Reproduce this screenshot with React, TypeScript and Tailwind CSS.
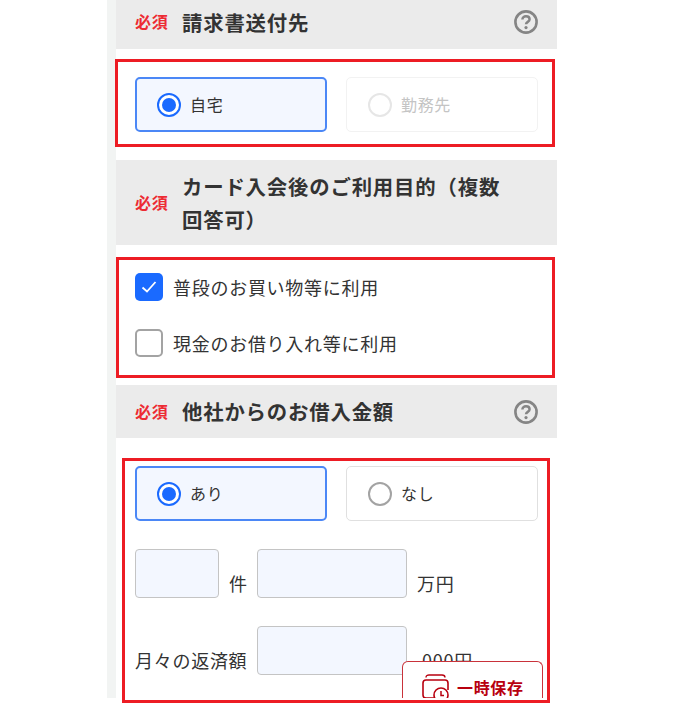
const font = { fontFamily: '"Noto Sans CJK JP", "Noto Sans", sans-serif' };

const HelpIcon = () => (
  <svg width="24" height="24" viewBox="0 0 24 24" fill="none" className="shrink-0">
    <circle cx="12" cy="12" r="10.6" stroke="#858585" strokeWidth="2.6" />
    <path d="M8.4 9.6c0-2.1 1.6-3.3 3.6-3.3s3.6 1.2 3.6 3c0 2.6-3.6 2.5-3.6 5" stroke="#858585" strokeWidth="2.5" />
    <circle cx="12" cy="17.6" r="1.6" fill="#858585" />
  </svg>
);

const SectionHead = ({ title, help, className }: { title: string; help?: boolean; className: string }) => (
  <div className={`flex items-center bg-[#ebebeb] pl-[19px] pr-[19px] ${className}`}>
    <span className="-mt-[2px] w-[47px] shrink-0 text-[16px] font-bold tracking-[0.04em] text-[#ed2b33]">必須</span>
    <h2 className="flex-1 pr-[24px] text-[20.4px] leading-[33px] font-bold tracking-[0.04em] text-[#333]">{title}</h2>
    {help && <HelpIcon />}
  </div>
);

const RadioCard = ({ label, state }: { label: string; state: 'on' | 'off' | 'disabled' }) => {
  const card =
    state === 'on'
      ? 'border-2 border-[#4b87f6] bg-[#f3f7ff] pl-[20px] text-[#333]'
      : state === 'off'
        ? 'border border-[#e0e0e0] bg-white pl-[21px] text-[#333]'
        : 'border border-[#f2f2f2] bg-white pl-[21px] text-[#c4c4c4]';
  return (
    <div className={`flex h-[55px] w-[192px] items-center gap-[9px] rounded-[5px] ${card}`}>
      {state === 'on' ? (
        <span className="flex h-[24px] w-[24px] items-center justify-center rounded-full border-2 border-[#1a6aff] bg-white">
          <span className="h-[14px] w-[14px] rounded-full bg-[#1a6aff]" />
        </span>
      ) : (
        <span className={`h-[24px] w-[24px] rounded-full border-2 bg-white ${state === 'off' ? 'border-[#a3a3a3]' : 'border-[#e6e6e6]'}`} />
      )}
      <span className="pb-[2px] text-[16px] tracking-[0.04em]">{label}</span>
    </div>
  );
};

const CheckRow = ({ label, checked }: { label: string; checked?: boolean }) => (
  <div className="flex items-center gap-[10px]">
    {checked ? (
      <span className="flex h-[28px] w-[28px] items-center justify-center rounded-[5px] bg-[#1a6aff]">
        <svg width="16" height="14" viewBox="0 0 16 14" fill="none">
          <path d="M1.5 7.5l4.5 4L14.5 2" stroke="#fff" strokeWidth="1.8" />
        </svg>
      </span>
    ) : (
      <span className="h-[28px] w-[28px] rounded-[5px] border-2 border-[#a3a3a3] bg-white" />
    )}
    <span className="text-[18px] leading-[28px] tracking-[0.04em] text-[#333]">{label}</span>
  </div>
);

const TextBox = ({ className }: { className: string }) => (
  <div className={`h-[49px] rounded-[4px] border border-[#c4c4c4] bg-[#f3f7ff] ${className}`} />
);

export default function App() {
  return (
    <div className="relative h-[710px] w-[673px] overflow-hidden bg-white" style={font}>
      <div className="ml-[107px] flex items-start">
        <div className="h-[698px] w-[9px] shrink-0 bg-[#f2f4f3]" />
        <div className="w-[441px] shrink-0">
          <SectionHead title="請求書送付先" help className="h-[49px] pb-[5px]" />

          <div className="mt-[10px] flex h-[88px] w-[440px] -ml-px gap-[19px] border-[3px] border-[#ed1c24] pl-[17px] pt-[15px]">
            <RadioCard label="自宅" state="on" />
            <RadioCard label="勤務先" state="disabled" />
          </div>

          <SectionHead title="カード入会後のご利用目的（複数回答可）" className="mt-[13px] h-[85px]" />

          <div className="mt-[12px] flex h-[121px] w-[439px] flex-col gap-[28px] border-[3px] border-[#ed1c24] pl-[16px] pt-[13px]">
            <CheckRow label="普段のお買い物等に利用" checked />
            <CheckRow label="現金のお借り入れ等に利用" />
          </div>

          <SectionHead title="他社からのお借入金額" help className="mt-[7px] h-[53px]" />

          <div className="relative mt-[20px] ml-[6px] h-[245px] w-[428px] border-[3px] border-[#ed1c24] pl-[10px] pt-[5px]">
            <div className="flex gap-[19px]">
              <RadioCard label="あり" state="on" />
              <RadioCard label="なし" state="off" />
            </div>
            <div className="mt-[28px] flex items-end text-[18px] tracking-[0.04em] text-[#333]">
              <TextBox className="w-[84px]" />
              <span className="ml-[10px] w-[28px] pb-[2px] leading-[26px]">件</span>
              <TextBox className="w-[150px]" />
              <span className="ml-[10px] pb-[2px] leading-[26px]">万円</span>
            </div>
            <div className="mt-[28px] flex items-end text-[18px] tracking-[0.04em] text-[#333]">
              <span className="w-[122px] pb-[2px] leading-[26px]">月々の返済額</span>
              <TextBox className="w-[150px]" />
              <span className="ml-[15px] pb-[2px] leading-[26px]">000円</span>
            </div>
          </div>
        </div>
      </div>

      {/* floating save button, cut off at the page edge */}
      <div className="absolute left-[402px] top-[661px] flex h-[37px] w-[141px] items-start gap-[7px] overflow-hidden rounded-t-[6px] border border-b-0 border-[#c9323a] bg-white pl-[19px] pt-[12px]">
        <svg width="28" height="30" viewBox="0 0 28 30" fill="none" className="shrink-0">
          <path d="M4 3.5C4 1.5 5.5 1 7 1h13c2 0 3 1 3 2.5" stroke="#b8000f" strokeWidth="1.4" />
          <path d="M13 24H4a3 3 0 0 1-3-3V9a3 3 0 0 1 3-3h19a3 3 0 0 1 3 3v7" stroke="#b8000f" strokeWidth="1.6" />
          <circle cx="19" cy="21" r="7" fill="#fff" stroke="#b8000f" strokeWidth="1.6" />
          <path d="M19 17v4.5h3" stroke="#b8000f" strokeWidth="1.5" />
        </svg>
        <span className="mt-[2px] text-[16px] leading-[22px] font-bold tracking-[0.04em] text-[#b8000f]">一時保存</span>
      </div>
    </div>
  );
}
